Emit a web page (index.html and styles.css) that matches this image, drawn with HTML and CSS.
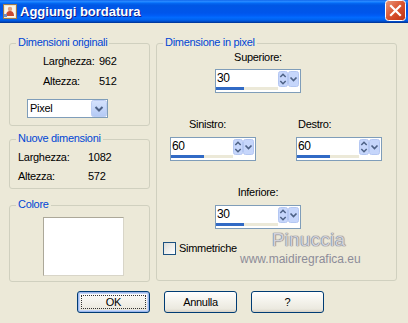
FILE: index.html
```html
<!DOCTYPE html>
<html lang="it">
<head>
    <meta charset="UTF-8">
    <title>Aggiungi bordatura</title>
    <link rel="stylesheet" href="styles.css">
</head>
<body>
<div class="window">
    <div class="titlebar">
        <svg class="app-icon" width="14" height="15" viewBox="0 0 14 15">
            <rect x="0.5" y="0.5" width="13" height="14" fill="#f3e7cb" stroke="#9c7a4e"/>
            <rect x="2" y="2" width="10" height="11" fill="#fbf6ea"/>
            <path d="M3 12 C3 8 5 7 7 7 C9 7 11 8 11 12 Z" fill="#c84a32"/>
            <circle cx="7" cy="5" r="2.2" fill="#e6a27c"/>
            <rect x="1" y="10" width="3" height="3" fill="#6c8fc8"/>
        </svg>
        <span class="title">Aggiungi bordatura</span>
        <div class="close-btn">
            <svg width="21" height="21" viewBox="0 0 21 21">
                <defs>
                    <linearGradient id="closeGrad" x1="0" y1="0" x2="1" y2="1">
                        <stop offset="0" stop-color="#ec9a7e"/>
                        <stop offset="0.5" stop-color="#d9532f"/>
                        <stop offset="1" stop-color="#bf3213"/>
                    </linearGradient>
                </defs>
                <rect x="0.5" y="0.5" width="20" height="20" rx="3" fill="url(#closeGrad)" stroke="#fff"/>
                <path d="M6 6 L15 15 M15 6 L6 15" stroke="#fff" stroke-width="2.2" stroke-linecap="square"/>
            </svg>
        </div>
    </div>

    <div class="content">
        <div class="columns">
            <div class="left-col">
                <div class="group group-orig">
                    <div class="group-title">Dimensioni originali</div>
                    <div class="info-row first"><span class="info-label">Larghezza:</span><span>962</span></div>
                    <div class="info-row"><span class="info-label">Altezza:</span><span>512</span></div>
                    <div class="combo">
                        <span class="combo-text">Pixel</span>
                        <svg class="combo-btn" width="16" height="17" viewBox="0 0 16 17">
                            <defs>
                                <linearGradient id="comboGrad" x1="0" y1="0" x2="0" y2="1">
                                    <stop offset="0" stop-color="#d6e3fd"/>
                                    <stop offset="1" stop-color="#b3c9f5"/>
                                </linearGradient>
                            </defs>
                            <rect x="0.5" y="0.5" width="15" height="16" rx="2" fill="url(#comboGrad)" stroke="#bccdf3"/>
                            <path d="M4.5 7 L8 10.5 L11.5 7" fill="none" stroke="#4d6185" stroke-width="2"/>
                        </svg>
                    </div>
                </div>

                <div class="group group-new">
                    <div class="group-title">Nuove dimensioni</div>
                    <div class="info-row first"><span class="info-label">Larghezza:</span><span>1082</span></div>
                    <div class="info-row"><span class="info-label">Altezza:</span><span>572</span></div>
                </div>

                <div class="group group-color">
                    <div class="group-title">Colore</div>
                    <div class="color-swatch"></div>
                </div>
            </div>

            <div class="group group-pixel">
                <div class="group-title">Dimensione in pixel</div>

                <div class="spin-col center-col first">
                    <div class="spin-label centered">Superiore:</div>
                    <div class="spin">
                        <div class="spin-field">
                            <div class="spin-value">30</div>
                            <div class="spin-track"><div class="spin-bar" style="width: 28px"></div></div>
                        </div>
                        <svg class="spin-arrows" width="10" height="16" viewBox="0 0 10 16">
                            <rect x="0.5" y="0.5" width="9" height="15" rx="2" fill="#c6d6fb" stroke="#b4c7f2"/>
                            <path d="M2.3 6 L5 3.3 L7.7 6 M2.3 10 L5 12.7 L7.7 10" fill="none" stroke="#4d6185" stroke-width="1.5"/>
                        </svg>
                        <svg class="spin-drop" width="11" height="16" viewBox="0 0 11 16">
                            <rect x="0.5" y="0.5" width="10" height="15" rx="2" fill="#c6d6fb" stroke="#b4c7f2"/>
                            <path d="M2.5 6.5 L5.5 9.5 L8.5 6.5" fill="none" stroke="#4d6185" stroke-width="1.7"/>
                        </svg>
                    </div>
                </div>

                <div class="side-row">
                    <div class="spin-col">
                        <div class="spin-label left-label">Sinistro:</div>
                        <div class="spin">
                            <div class="spin-field">
                                <div class="spin-value">60</div>
                                <div class="spin-track"><div class="spin-bar" style="width: 33px"></div></div>
                            </div>
                            <svg class="spin-arrows" width="10" height="16" viewBox="0 0 10 16">
                                <rect x="0.5" y="0.5" width="9" height="15" rx="2" fill="#c6d6fb" stroke="#b4c7f2"/>
                                <path d="M2.3 6 L5 3.3 L7.7 6 M2.3 10 L5 12.7 L7.7 10" fill="none" stroke="#4d6185" stroke-width="1.5"/>
                            </svg>
                            <svg class="spin-drop" width="11" height="16" viewBox="0 0 11 16">
                                <rect x="0.5" y="0.5" width="10" height="15" rx="2" fill="#c6d6fb" stroke="#b4c7f2"/>
                                <path d="M2.5 6.5 L5.5 9.5 L8.5 6.5" fill="none" stroke="#4d6185" stroke-width="1.7"/>
                            </svg>
                        </div>
                    </div>
                    <div class="spin-col">
                        <div class="spin-label right-label">Destro:</div>
                        <div class="spin">
                            <div class="spin-field">
                                <div class="spin-value">60</div>
                                <div class="spin-track"><div class="spin-bar" style="width: 33px"></div></div>
                            </div>
                            <svg class="spin-arrows" width="10" height="16" viewBox="0 0 10 16">
                                <rect x="0.5" y="0.5" width="9" height="15" rx="2" fill="#c6d6fb" stroke="#b4c7f2"/>
                                <path d="M2.3 6 L5 3.3 L7.7 6 M2.3 10 L5 12.7 L7.7 10" fill="none" stroke="#4d6185" stroke-width="1.5"/>
                            </svg>
                            <svg class="spin-drop" width="11" height="16" viewBox="0 0 11 16">
                                <rect x="0.5" y="0.5" width="10" height="15" rx="2" fill="#c6d6fb" stroke="#b4c7f2"/>
                                <path d="M2.5 6.5 L5.5 9.5 L8.5 6.5" fill="none" stroke="#4d6185" stroke-width="1.7"/>
                            </svg>
                        </div>
                    </div>
                </div>

                <div class="spin-col center-col">
                    <div class="spin-label centered">Inferiore:</div>
                    <div class="spin">
                        <div class="spin-field">
                            <div class="spin-value">30</div>
                            <div class="spin-track"><div class="spin-bar" style="width: 28px"></div></div>
                        </div>
                        <svg class="spin-arrows" width="10" height="16" viewBox="0 0 10 16">
                            <rect x="0.5" y="0.5" width="9" height="15" rx="2" fill="#c6d6fb" stroke="#b4c7f2"/>
                            <path d="M2.3 6 L5 3.3 L7.7 6 M2.3 10 L5 12.7 L7.7 10" fill="none" stroke="#4d6185" stroke-width="1.5"/>
                        </svg>
                        <svg class="spin-drop" width="11" height="16" viewBox="0 0 11 16">
                            <rect x="0.5" y="0.5" width="10" height="15" rx="2" fill="#c6d6fb" stroke="#b4c7f2"/>
                            <path d="M2.5 6.5 L5.5 9.5 L8.5 6.5" fill="none" stroke="#4d6185" stroke-width="1.7"/>
                        </svg>
                    </div>
                </div>

                <div class="check-row">
                    <span class="checkbox"></span>
                    <span class="check-label">Simmetriche</span>
                </div>

                <div class="watermark">
                    <div class="wm-name">Pinuccia</div>
                    <div class="wm-url">www.maidiregrafica.eu</div>
                </div>
            </div>
        </div>

        <div class="buttons">
            <div class="btn btn-default">OK</div>
            <div class="btn">Annulla</div>
            <div class="btn">?</div>
        </div>
    </div>
</div>
</body>
</html>
```

FILE: styles.css
```css
body {
    margin: 0;
    font-family: "Liberation Sans", Arial, sans-serif;
    font-size: 11px;
    letter-spacing: -0.3px;
    color: #000;
}

.window {
    width: 408px;
    height: 323px;
    background-color: #ece9d8;
    overflow: hidden;
}

/* title bar */
.titlebar {
    height: 23px;
    display: flex;
    align-items: center;
    background: linear-gradient(to bottom, #0a5fe8 0%, #2d8bff 5%, #127dff 10%, #0262ee 16%, #0057e5 24%, #0055eb 56%, #005bf5 66%, #026afe 76%, #0062ef 86%, #0052d6 92%, #0040ab 96%, #003092 100%);
}

.app-icon {
    margin-left: 3px;
    flex-shrink: 0;
}

.title {
    margin-left: 3px;
    color: #fff;
    font-size: 13px;
    font-weight: bold;
    letter-spacing: 0;
    text-shadow: 1px 1px #0f1a89;
}

.close-btn {
    margin-left: auto;
    margin-right: 2px;
    height: 21px;
    align-self: flex-start;
}

/* body */
.content {
    padding: 20px 0 0 9px;
}

.columns {
    display: flex;
    gap: 6px;
}

.left-col {
    width: 141px;
    display: flex;
    flex-direction: column;
}

.group {
    box-sizing: border-box;
    border: 1px solid #d0d0bf;
    border-radius: 3px;
}

.group-title {
    width: max-content;
    margin: -8px 0 0 6px;
    padding: 0 2px;
    line-height: 13px;
    color: #0046d5;
    background-color: #ece9d8;
}

.group-orig {
    height: 83px;
}

.group-new {
    height: 50px;
    margin-top: 13px;
}

.group-color {
    height: 77px;
    margin-top: 16px;
}

.group-pixel {
    width: 241px;
    height: 238px;
    position: relative;
}

.info-row {
    display: flex;
    line-height: 20px;
}

.group-orig .info-row {
    padding-left: 33px;
}

.group-orig .info-label {
    width: 56px;
}

.group-orig .info-row.first {
    margin-top: 2px;
}

.group-new .info-row {
    padding-left: 8px;
    line-height: 19px;
}

.group-new .info-row.first {
    margin-top: 3px;
}

.group-new .info-label {
    width: 70px;
}

.combo {
    box-sizing: border-box;
    width: 81px;
    height: 19px;
    margin: 8px 0 0 17px;
    border: 1px solid #7f9db9;
    background-color: #fff;
    display: flex;
    align-items: center;
}

.combo-text {
    flex: 1;
    padding-left: 2px;
    line-height: 17px;
}

.combo-btn {
    height: 17px;
}

.color-swatch {
    box-sizing: border-box;
    width: 81px;
    height: 59px;
    margin: 6px 0 0 33px;
    background-color: #fff;
    border: 1px solid #aca899;
    border-right-color: #d8d5c8;
    border-bottom-color: #d8d5c8;
}

/* spin controls */
.spin-col {
    width: 86px;
}

.center-col {
    margin: 25px 0 0 58px;
}

.center-col.first {
    margin-top: 2px;
}

.spin-label {
    line-height: 13px;
}

.spin-label.centered {
    text-align: center;
}

.spin-label.left-label {
    padding-left: 19px;
}

.spin-label.right-label {
    padding-left: 2px;
}

.spin {
    box-sizing: border-box;
    height: 24px;
    margin-top: 5px;
    border: 1px solid #7f9db9;
    background-color: #fff;
    display: flex;
    align-items: flex-start;
}

.side-row .spin,
.center-col:not(.first) .spin {
    margin-top: 6px;
}

.spin-field {
    flex: 1;
}

.spin-value {
    line-height: 16px;
    padding-left: 1px;
    font-size: 12px;
}

.spin-track {
    height: 3px;
    margin-top: 1px;
    background-color: #ece9d8;
}

.spin-bar {
    height: 3px;
    background-color: #316ac5;
}

.spin-arrows {
    margin-top: 1px;
}

.spin-drop {
    margin: 1px 1px 0 0;
}

.side-row {
    display: flex;
    gap: 40px;
    margin: 25px 0 0 13px;
}

.check-row {
    display: flex;
    align-items: center;
    margin: 13px 0 0 6px;
}

.checkbox {
    box-sizing: border-box;
    width: 13px;
    height: 13px;
    border: 1px solid #1c5180;
    background: linear-gradient(135deg, #dcdcd7, #fff);
}

.check-label {
    margin-left: 3px;
    line-height: 13px;
}

.watermark {
    position: absolute;
    left: 83px;
    top: 185px;
    letter-spacing: 0;
    pointer-events: none;
}

.wm-name {
    margin-left: 32px;
    font-size: 19px;
    line-height: 21px;
    letter-spacing: 0.2px;
    color: #d2d2da;
    text-shadow: 0 0 1px #7d7d88, 0 0 1px #7d7d88, 0 0 1px #7d7d88;
}

.wm-url {
    margin-top: 2px;
    font-size: 12px;
    line-height: 14px;
    color: #8c8c98;
}

/* buttons */
.buttons {
    display: flex;
    gap: 14px;
    margin: 9px 0 0 68px;
}

.btn {
    box-sizing: border-box;
    width: 73px;
    height: 22px;
    border: 1px solid #003c74;
    border-radius: 3px;
    background: linear-gradient(to bottom, #fff 0%, #f5f4ee 40%, #ebe9df 85%, #d6d0c5 100%);
    display: flex;
    align-items: center;
    justify-content: center;
}

.btn-default {
    box-shadow: inset 0 0 0 1px #9cb7ec, inset 0 0 0 2px #c4d6f8;
    position: relative;
}

.btn-default::after {
    content: "";
    position: absolute;
    left: 3px;
    top: 3px;
    right: 3px;
    bottom: 3px;
    border: 1px dotted #333;
}
```
